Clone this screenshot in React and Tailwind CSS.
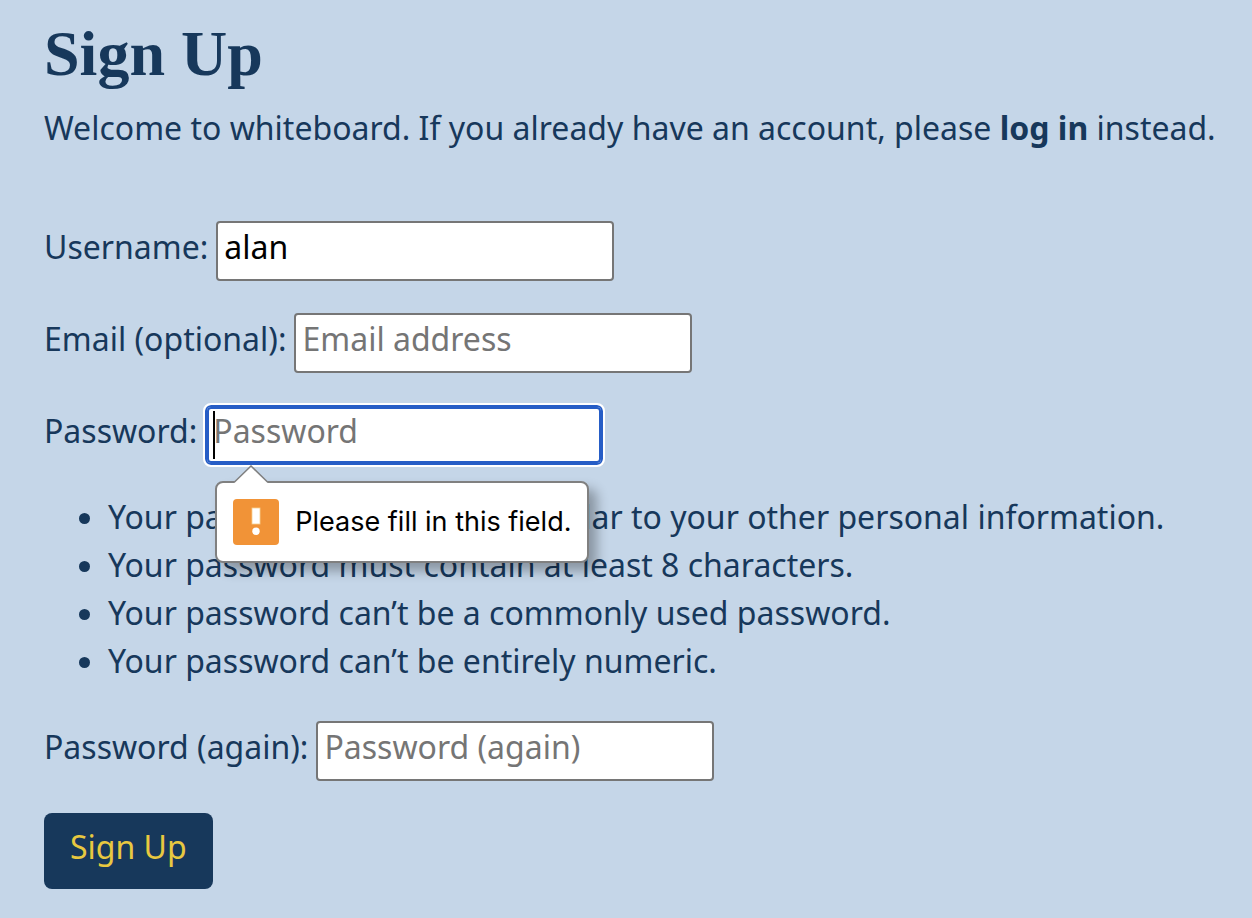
import React from "react";

const rules = [
  "Your password can’t be too similar to your other personal information.",
  "Your password must contain at least 8 characters.",
  "Your password can’t be a commonly used password.",
  "Your password can’t be entirely numeric.",
];

const inputClass =
  "h-[60px] w-[398px] rounded-[4px] border-2 border-[#767676] bg-white px-1.5 pb-2.5 text-black placeholder:text-[#757575] placeholder:opacity-100 outline-none";

const activeInputClass =
  "h-[60px] w-[398px] rounded-[6px] border-2 border-[#265dc6] bg-white px-1.5 pb-2.5 text-black inset-ring-2 inset-ring-[#265dc6] outline-2 outline-white placeholder:text-[#757575] placeholder:opacity-100";

function Field({ id, label, className = inputClass, children, ...props }) {
  return (
    <div className="flex items-baseline gap-2">
      <label htmlFor={id} className="whitespace-nowrap">
        {label}
      </label>
      <div className="relative">
        <input id={id} className={className} {...props} />
        {children}
      </div>
    </div>
  );
}

function ValidationBubble() {
  return (
    <div
      role="alert"
      className="absolute left-2.5 top-[76px] z-10 flex items-center gap-4 rounded-lg border-2 border-[#808080] bg-white p-4 font-['Inter','Liberation_Sans',sans-serif] text-[27px] leading-[46px] text-black shadow-[8px_8px_12px_rgba(0,0,0,0.3)]"
    >
      <svg
        className="absolute -top-[18px] left-4"
        width="36"
        height="19"
        viewBox="0 0 36 19"
        aria-hidden="true"
      >
        <path d="M1 19V17.5L18 1L35 17.5V19Z" fill="#fff" />
        <path d="M1 17.5L18 1L35 17.5" fill="none" stroke="#808080" strokeWidth="1.5" />
      </svg>
      <svg width="46" height="46" viewBox="0 0 46 46" className="shrink-0" aria-hidden="true">
        <rect width="46" height="46" rx="4" fill="#f19337" />
        <rect x="19" y="9" width="8" height="16" fill="#fff" stroke="#f8cf8f" strokeWidth="0.8" />
        <circle cx="23" cy="32.3" r="3.7" fill="#fff" />
      </svg>
      <span className="whitespace-nowrap">Please fill in this field.</span>
    </div>
  );
}

export default function App() {
  return (
    <main className="min-h-screen bg-[#c5d6e8] px-11 pb-7 pt-4 font-['Noto_Sans','Open_Sans',sans-serif] text-[32px] leading-[48px] text-[#17385b]">
      <h1 className="font-['Liberation_Serif',serif] text-[64px] font-bold leading-[76px]">
        Sign Up
      </h1>
      <p className="mt-3 whitespace-nowrap">
        Welcome to whiteboard. If you already have an account, please{" "}
        <a href="#login" className="font-bold">
          log in
        </a>{" "}
        instead.
      </p>
      <form className="mt-[69px]" noValidate onSubmit={(e) => e.preventDefault()}>
        <div className="flex flex-col gap-8">
          <Field id="username" label="Username:" type="text" defaultValue="alan" />
          <Field id="email" label="Email (optional):" type="email" placeholder="Email address" />
          <Field
            id="password"
            label="Password:"
            type="password"
            placeholder="Password"
            className={activeInputClass}
          >
            <span className="absolute left-2 top-1.5 h-12 w-0.5 bg-black" aria-hidden="true" />
            <ValidationBubble />
          </Field>
        </div>
        <ul className="mb-9 mt-7 list-disc pl-16">
          {rules.map((rule) => (
            <li key={rule}>{rule}</li>
          ))}
        </ul>
        <Field
          id="password-again"
          label="Password (again):"
          type="password"
          placeholder="Password (again)"
        />
        <button
          type="submit"
          className="mt-8 rounded-lg bg-[#17385b] px-[26px] pb-[18px] pt-2.5 text-[#e8c840]"
        >
          Sign Up
        </button>
      </form>
    </main>
  );
}
